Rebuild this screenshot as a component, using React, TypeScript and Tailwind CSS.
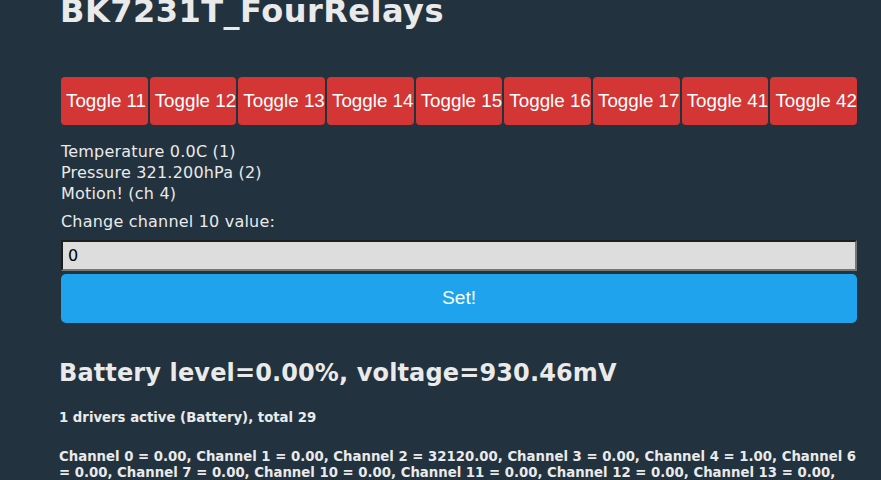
import React from "react";

const toggles = ["11", "12", "13", "14", "15", "16", "17", "41", "42"];

export default function App() {
  return (
    <div className="w-[881px] h-[480px] overflow-hidden bg-[#22323f] text-[#eaeaea] font-['DejaVu_Sans',Verdana,sans-serif]">
      <div className="ml-[61px] w-[796px]">
        <h1 className="mt-[-7px] ml-[-1px] text-[32px] leading-[37px] font-bold whitespace-nowrap tracking-[0.5px]">
          BK7231T_FourRelays
        </h1>
        <div className="mt-[47px] flex gap-[2px]">
          {toggles.map((t) => (
            <div
              key={t}
              className="flex-1 min-w-0 h-[48px] rounded-[4px] bg-[#d43535] text-white font-['Liberation_Sans',Arial,sans-serif] text-[18.8px] flex items-center justify-start pl-[5px] overflow-hidden whitespace-nowrap"
            >
              Toggle {t}
            </div>
          ))}
        </div>
        <div className="mt-[16px] text-[16px] leading-[21px] tracking-[0.2px]">
          <div>Temperature 0.0C (1)</div>
          <div>Pressure 321.200hPa (2)</div>
          <div>Motion! (ch 4)</div>
        </div>
        <div className="mt-[7px] text-[16px] leading-[21px] tracking-[0.2px]">Change channel 10 value:</div>
        <div className="mt-[8px] h-[31px] bg-[#dddddd] border-2 border-t-[#1e1e1e] border-l-[#1e1e1e] border-b-[#767676] border-r-[#767676] text-black text-[16px] flex items-center px-[5px]">
          0
        </div>
        <div className="mt-[3px] h-[49px] rounded-[5px] bg-[#1fa3ec] text-[#faffff] font-['Liberation_Sans',Arial,sans-serif] text-[19.2px] flex items-center justify-center">
          Set!
        </div>
        <h2 className="mt-[36px] ml-[-2px] text-[24px] leading-[28px] font-bold whitespace-nowrap tracking-[0.13px]">
          Battery level=0.00%, voltage=930.46mV
        </h2>
        <div className="mt-[23px] ml-[-2px] text-[13.28px] leading-[16px] font-bold">
          1 drivers active (Battery), total 29
        </div>
        <div className="mt-[23px] ml-[-2px] text-[13.28px] leading-[16.3px] font-bold">
          Channel 0 = 0.00, Channel 1 = 0.00, Channel 2 = 32120.00, Channel 3 = 0.00, Channel 4 = 1.00, Channel 6 = 0.00, Channel 7 = 0.00, Channel 10 = 0.00, Channel 11 = 0.00, Channel 12 = 0.00, Channel 13 = 0.00, Channel 14 = 0.00, Channel 15 = 0.00
        </div>
      </div>
    </div>
  );
}
